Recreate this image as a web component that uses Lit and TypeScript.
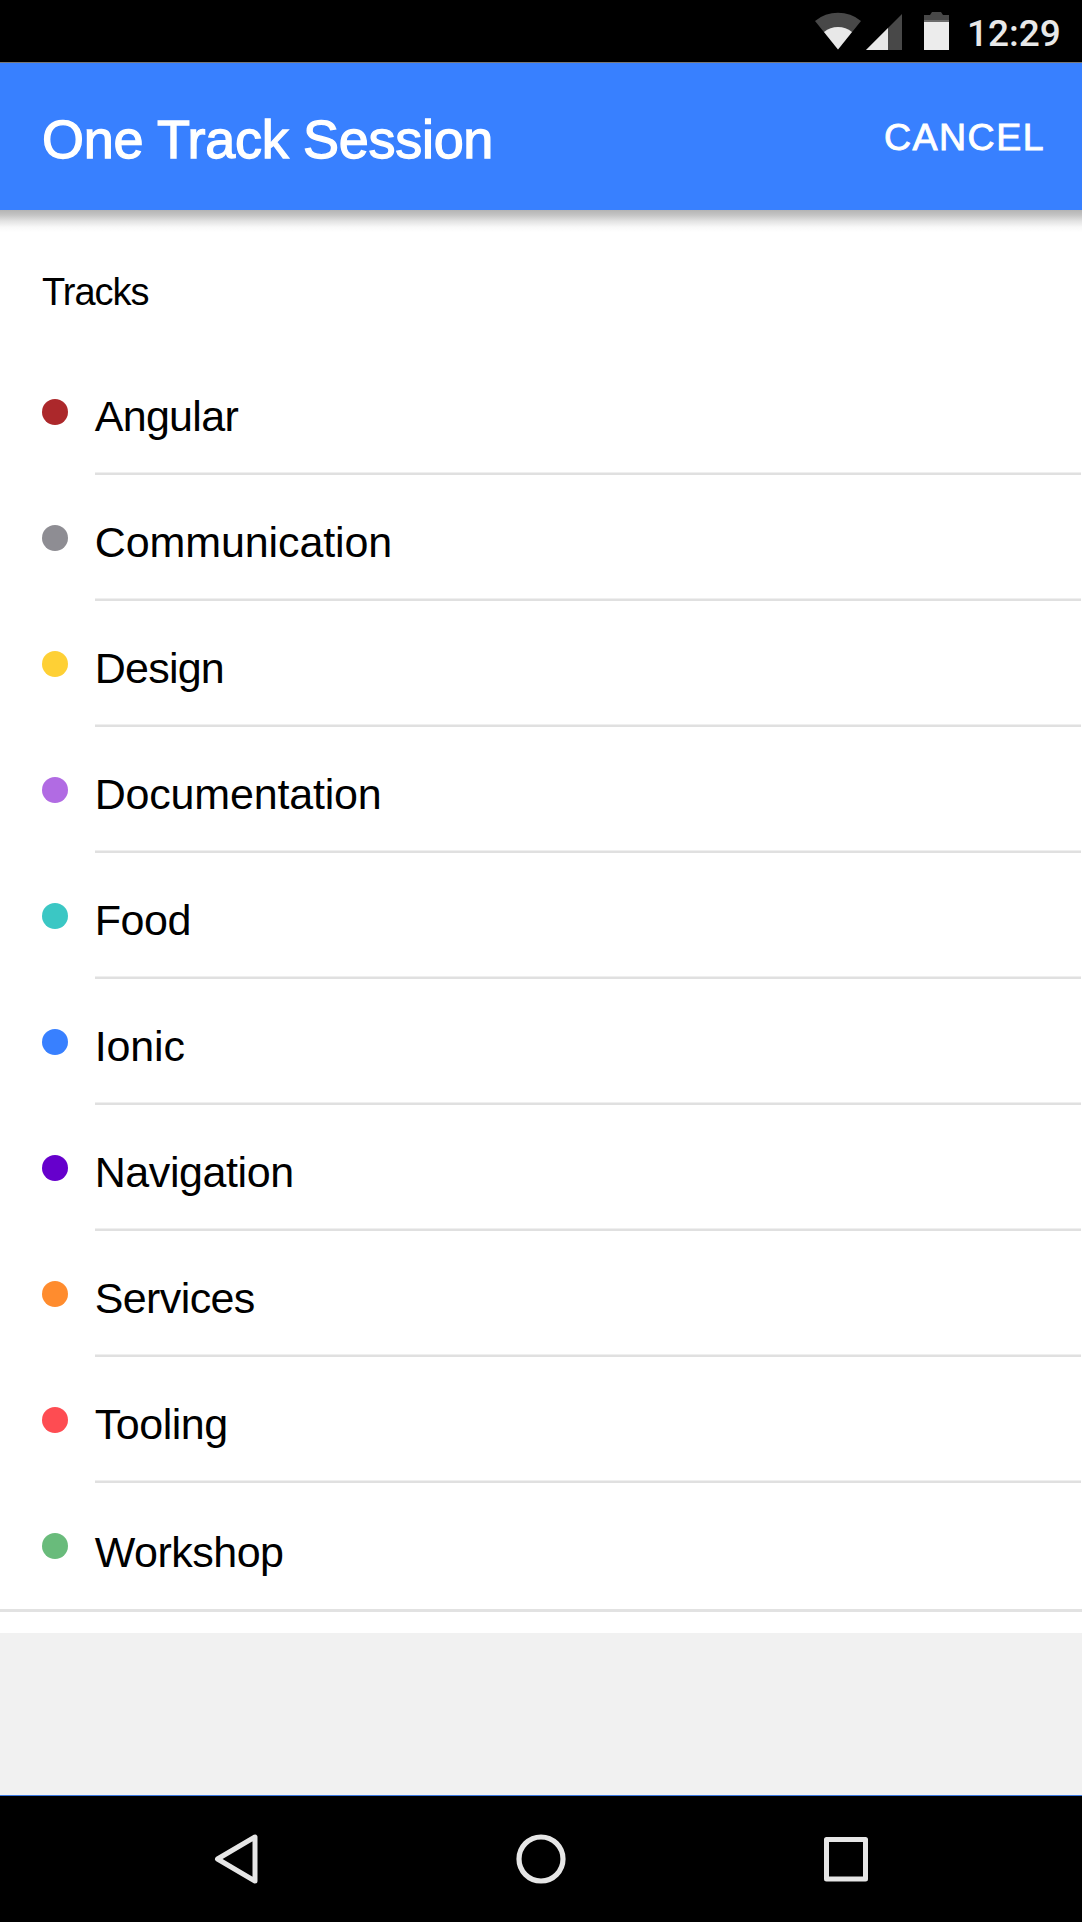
import { LitElement, html, css, svg } from "lit";
import { customElement, property } from "lit/decorators.js";

interface Track {
  name: string;
  color: string;
  /** Letter spacing of the label, in pixels. */
  tracking: number;
}

const TRACKS: Track[] = [
  { name: "Angular", color: "#ac282b", tracking: -0.7 },
  { name: "Communication", color: "#8e8d93", tracking: -0.1 },
  { name: "Design", color: "#fed035", tracking: -0.75 },
  { name: "Documentation", color: "#b16be3", tracking: -0.18 },
  { name: "Food", color: "#3bc7c4", tracking: -0.4 },
  { name: "Ionic", color: "#3880ff", tracking: -0.15 },
  { name: "Navigation", color: "#6600cc", tracking: -0.42 },
  { name: "Services", color: "#ff8c2e", tracking: -0.6 },
  { name: "Tooling", color: "#fe4c52", tracking: -0.45 },
  { name: "Workshop", color: "#69bb7b", tracking: -0.5 },
];

@customElement("status-bar")
export class StatusBar extends LitElement {
  static styles = css`
    :host {
      display: flex;
      box-sizing: border-box;
      height: 63px;
      background: #000;
      border-bottom: 1px solid #777;
      justify-content: flex-end;
      padding-right: 23px;
    }
    .icons {
      display: block;
      width: 150px;
      height: 62px;
      margin-right: 5px;
    }
    .time {
      font: 500 37px/62px Roboto, sans-serif;
      color: #e8e8e8;
      padding-top: 3px;
      height: 59px;
      width: 92px;
      white-space: nowrap;
    }
  `;

  render() {
    return html`
      <svg class="icons" viewBox="812 0 150 62" aria-hidden="true">
        ${svg`
          <path d="M838 49.500 L815 21 A36 36 0 0 1 861 21 Z" fill="#484848"/>
          <path d="M838 49.500 L824 32 A22.500 22.500 0 0 1 852 32 Z" fill="#e8e8e8"/>
          <path d="M866 50 L902 14 V50 Z" fill="#484848"/>
          <path d="M866 50 L888 28 V50 Z" fill="#e8e8e8"/>
          <path d="M932 12 H941 L943 15 H949 V22 H924 V15 H930 Z" fill="#484848"/>
          <path d="M924 20 H949 V22 H924 Z" fill="#6c6c6c"/>
          <path d="M924 22 H949 V50 H924 Z" fill="#ececec"/>
        `}
      </svg>
      <div class="time">12:29</div>
    `;
  }
}

@customElement("app-toolbar")
export class AppToolbar extends LitElement {
  static styles = css`
    :host {
      display: flex;
      height: 147px;
      background: #3880ff;
      color: #fff;
      justify-content: space-between;
      align-items: flex-start;
      padding: 0 37px 0 42px;
    }
    .title {
      font: 400 54px/64px "Liberation Sans", Arial, sans-serif;
      -webkit-text-stroke: 1.300px #fff;
      letter-spacing: -0.3px;
      margin-top: 44px;
      white-space: nowrap;
    }
    .cancel {
      all: unset;
      font: 400 37.500px/44px "Liberation Sans", Arial, sans-serif;
      -webkit-text-stroke: 0.900px #fff;
      letter-spacing: 1.500px;
      margin-top: 52px;
      white-space: nowrap;
    }
  `;

  render() {
    return html`
      <div class="title">One Track Session</div>
      <button class="cancel">CANCEL</button>
    `;
  }
}

@customElement("track-item")
export class TrackItem extends LitElement {
  @property({ type: Object }) track!: Track;
  @property({ type: Boolean, reflect: true }) last = false;

  static styles = css`
    :host {
      display: flex;
      box-sizing: border-box;
      height: 126px;
      padding: 0 1px 0 42px;
    }
    :host([last]) {
      height: 129px;
      border-bottom: 3px solid #e2e2e2;
    }
    .dot {
      flex: none;
      width: 26.400px;
      height: 26.400px;
      border-radius: 50%;
      margin: 50px 26.300px 0 0;
    }
    .label {
      flex: 1;
      box-sizing: border-box;
      border-bottom: 2px solid #e0e0e0;
      box-shadow: inset 0 -1px #efefef;
      padding-top: 42px;
      font: 400 43px/50px "Liberation Sans", Arial, sans-serif;
      color: #000;
      white-space: nowrap;
    }
    :host([last]) .label {
      border-bottom: 0;
      box-shadow: none;
      padding-top: 44px;
    }
  `;

  render() {
    const { name, color, tracking } = this.track;
    return html`
      <span class="dot" style="background:${color}"></span>
      <div class="label" style="letter-spacing:${tracking}px">${name}</div>
    `;
  }
}

@customElement("navigation-bar")
export class NavigationBar extends LitElement {
  static styles = css`
    :host {
      display: flex;
      height: 126px;
      background: #000;
      border-top: 1px solid #3a78e0;
    }
    .keys {
      display: block;
      width: 1082px;
      height: 126px;
    }
  `;

  render() {
    return html`
      <svg class="keys" viewBox="0 1796 1082 126" aria-hidden="true">
        ${svg`
          <g fill="none" stroke="#e6e6e6" stroke-width="5" stroke-linejoin="round">
            <path d="M217.500 1859 L255 1837 V1881 Z"/>
            <circle cx="541" cy="1859" r="22" stroke-width="5.200"/>
            <rect x="826.500" y="1839.500" width="39" height="39.500"/>
          </g>
        `}
      </svg>
    `;
  }
}

@customElement("app-root")
export class AppRoot extends LitElement {
  static styles = css`
    :host {
      display: flex;
      flex-direction: column;
      width: 1082px;
      height: 1922px;
      overflow: hidden;
      background: #f1f1f1;
    }
    .content {
      flex: none;
      height: 1423px;
      background: linear-gradient(#b4b4b4 0, #c4c4c4 5px, #e2e2e2 11px, #f8f8f8 17px, #fff 22px);
    }
    .heading {
      box-sizing: border-box;
      height: 139px;
      padding: 60px 0 0 42px;
      font: 400 38px/44px "Liberation Sans", Arial, sans-serif;
      letter-spacing: -1px;
      color: #000;
    }
    .spacer {
      flex: 1;
    }
  `;

  render() {
    return html`
      <status-bar></status-bar>
      <app-toolbar></app-toolbar>
      <main class="content">
        <div class="heading">Tracks</div>
        ${TRACKS.map(
          (t, i) => html`<track-item .track=${t} ?last=${i === TRACKS.length - 1}></track-item>`
        )}
      </main>
      <div class="spacer"></div>
      <navigation-bar></navigation-bar>
    `;
  }
}
